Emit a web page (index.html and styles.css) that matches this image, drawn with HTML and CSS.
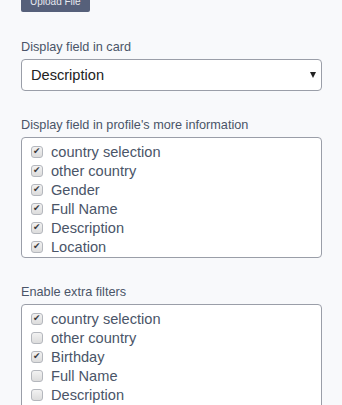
FILE: index.html
```html
<!DOCTYPE html>
<html lang="en">
<head>
  <meta charset="UTF-8">
  <title>Profile settings</title>
  <link rel="stylesheet" href="styles.css">
</head>
<body>

<div class="settings">
  <div class="upload-row">
    <button class="upload-btn">Upload File</button>
  </div>

  <div class="form-group">
    <label for="cardField">Display field in card</label>
    <div class="select-wrap">
      <select id="cardField">
        <option>Description</option>
      </select>
    </div>
  </div>

  <div class="form-group">
    <label>Display field in profile's more information</label>
    <div class="check-list">
      <label class="check-item"><input type="checkbox" checked> country selection</label>
      <label class="check-item"><input type="checkbox" checked> other country</label>
      <label class="check-item"><input type="checkbox" checked> Gender</label>
      <label class="check-item"><input type="checkbox" checked> Full Name</label>
      <label class="check-item"><input type="checkbox" checked> Description</label>
      <label class="check-item"><input type="checkbox" checked> Location</label>
    </div>
  </div>

  <div class="form-group">
    <label>Enable extra filters</label>
    <div class="check-list">
      <label class="check-item"><input type="checkbox" checked> country selection</label>
      <label class="check-item"><input type="checkbox"> other country</label>
      <label class="check-item"><input type="checkbox" checked> Birthday</label>
      <label class="check-item"><input type="checkbox"> Full Name</label>
      <label class="check-item"><input type="checkbox"> Description</label>
      <label class="check-item"><input type="checkbox"> Location</label>
    </div>
  </div>
</div>

</body>
</html>
```

FILE: styles.css
```css
body {
  font-family: "Liberation Sans", Arial, sans-serif;
  margin: 0;
  padding: 0;
  background-color: #f8f9fb;
  color: #4a5568;
}
.settings {
  padding: 0 20px 0 21px;
  margin-top: -10px;
}
.upload-row {
  margin-bottom: 28px;
}
.upload-btn {
  background-color: #56607a;
  color: #e8eaf0;
  border: none;
  border-radius: 2px;
  font-family: inherit;
  font-size: 10px;
  padding: 5px 9px;
  height: 22px;
}
.form-group {
  margin-bottom: 27px;
}
.form-group > label {
  display: block;
  font-size: 12.7px;
  line-height: 15px;
  margin-bottom: 4px;
}
.select-wrap {
  position: relative;
}
.select-wrap select {
  width: 100%;
  height: 32px;
  box-sizing: border-box;
  border: 1px solid #9a9ea8;
  border-radius: 4px;
  background: #fff;
  font-family: inherit;
  font-size: 14.6px;
  color: #222;
  padding: 0 9px;
  appearance: none;
}
.select-wrap::after {
  content: "";
  position: absolute;
  right: 6px;
  top: 13px;
  border-left: 3px solid transparent;
  border-right: 3px solid transparent;
  border-top: 6px solid #222;
}
.check-list {
  background: #fff;
  border: 1px solid #9a9ea8;
  border-radius: 4px;
  padding: 4px 9px 2px;
  height: 121px;
  box-sizing: border-box;
  overflow: hidden;
}
.check-item {
  display: flex;
  align-items: center;
  gap: 8px;
  height: 19px;
  font-size: 14.6px;
  color: #4a5568;
}
.check-item input {
  appearance: none;
  position: relative;
  margin: 0;
  width: 12px;
  height: 12px;
  border: 1px solid #b4b7bd;
  border-radius: 3px;
  background: linear-gradient(#f2f2f2, #dcdcdc);
  box-sizing: border-box;
}
.check-item input:checked::after {
  content: "\2714";
  position: absolute;
  left: 1px;
  top: -1px;
  font-family: "DejaVu Sans", sans-serif;
  font-size: 9px;
  line-height: 11px;
  color: #3a3a3a;
}
```
